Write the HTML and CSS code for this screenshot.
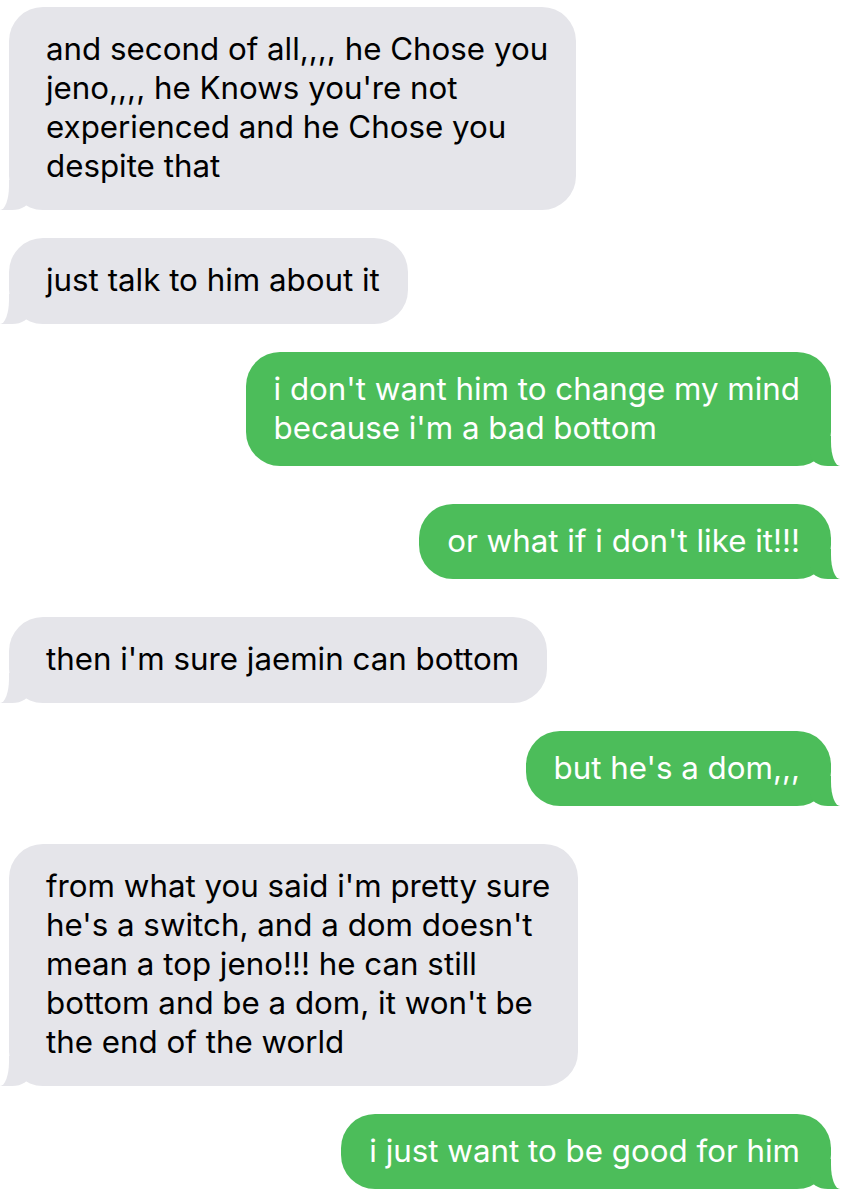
FILE: index.html
```html
<!DOCTYPE html>
<html lang="en">
<head>
    <meta charset="UTF-8">
    <meta name="viewport" content="width=device-width, initial-scale=1.0">
    <title>Messages</title>
    <link rel="stylesheet" href="styles.css">
</head>
<body>

    <div class="thread">
        <!-- incoming -->
        <div class="msg them">and second of all,,,, he Chose you<br>jeno,,,, he Knows you're not<br>experienced and he Chose you<br>despite that</div>
        <div class="msg them">just talk to him about it</div>

        <!-- outgoing -->
        <div class="msg me">i don't want him to change my mind<br>because i'm a bad bottom</div>
        <div class="msg me far">or what if i don't like it!!!</div>

        <div class="msg them far">then i'm sure jaemin can bottom</div>

        <div class="msg me">but he's a dom,,,</div>

        <div class="msg them far">from what you said i'm pretty sure<br>he's a switch, and a dom doesn't<br>mean a top jeno!!! he can still<br>bottom and be a dom, it won't be<br>the end of the world</div>

        <div class="msg me">i just want to be good for him</div>
    </div>

</body>
</html>
```

FILE: styles.css
```css
body {
    margin: 0;
    background-color: #fff;
    font-family: Inter, "Noto Sans", sans-serif;
}

.thread {
    display: flex;
    flex-direction: column;
    gap: 28px;
    padding: 7px 19px 0 9px;
}

.msg {
    position: relative;
    border-radius: 34px;
    font-size: 31.3px;
    line-height: 39px;
}

.msg.far {
    margin-top: 10px;
}

/* tail pieces */
.msg::before,
.msg::after {
    content: "";
    position: absolute;
    bottom: 0;
    height: 30px;
}

.them {
    align-self: flex-start;
    background-color: #e5e5ea;
    color: #000;
    padding: 23px 28px 24px 37px;
}

.them::before {
    left: -9px;
    width: 30px;
    background-color: #e5e5ea;
    border-bottom-right-radius: 18px 12px;
}

.them::after {
    left: -16px;
    width: 16px;
    background-color: #fff;
    border-bottom-right-radius: 9px 24px;
}

.me {
    align-self: flex-end;
    background-color: #4cbd5a;
    color: #fff;
    padding: 18px 31px 18px 28px;
}

.me::before {
    right: -9px;
    width: 30px;
    background-color: #4cbd5a;
    border-bottom-left-radius: 18px 12px;
}

.me::after {
    right: -16px;
    width: 16px;
    background-color: #fff;
    border-bottom-left-radius: 9px 24px;
}
```
